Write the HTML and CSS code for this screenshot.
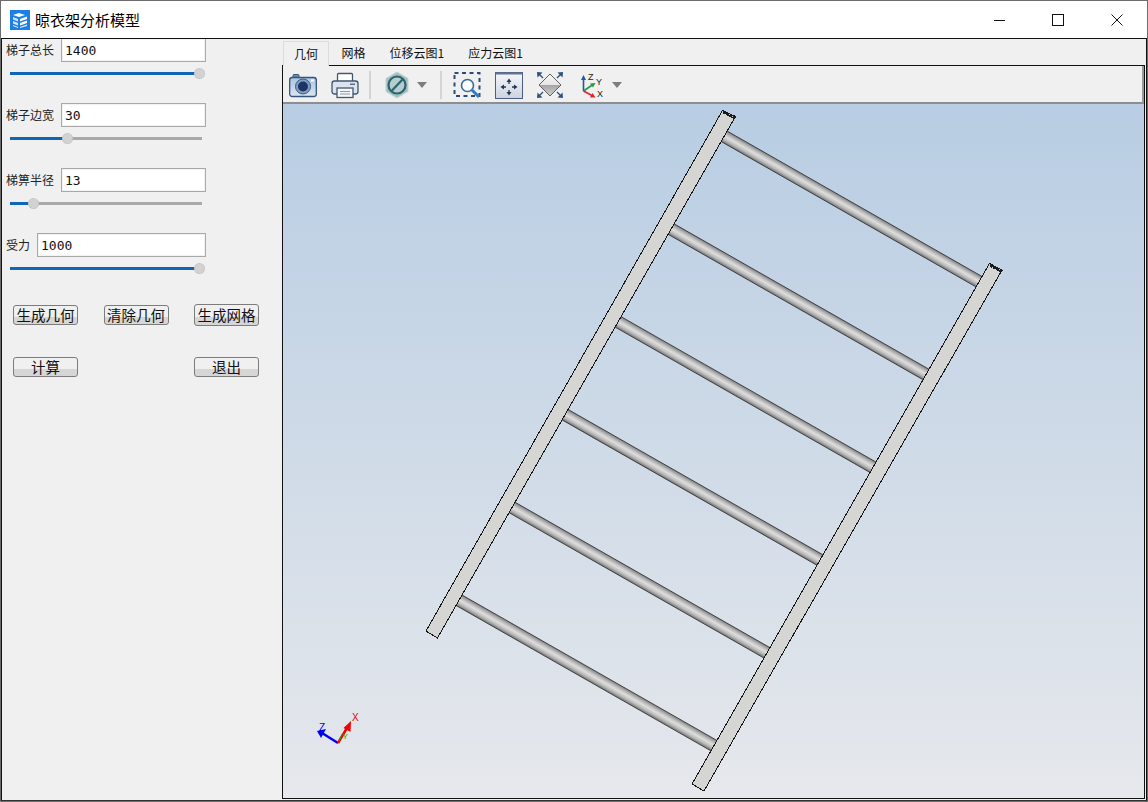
FILE: index.html
```html
<!DOCTYPE html>
<html lang="zh-CN">
<head>
<meta charset="utf-8">
<title>晾衣架分析模型</title>
<link rel="stylesheet" href="styles.css">
</head>
<body>
<div class="window">
  <header class="titlebar">
    <svg class="app-icon" width="20" height="20" viewBox="0 0 20 20">
      <rect width="20" height="20" fill="#1b7fe6"/>
      <path d="M3 5 L9 3 L15 5 L9 7 Z" fill="#fff"/>
      <path d="M3 7 L8 9 V11.5 L3 9.5 Z M3 11 L8 13 V15.5 L3 13.5 Z" fill="#cfe6fb"/>
      <path d="M10 9 L17 6.5 V9 L10 11.5 Z M10 13 L17 10.5 V13 L10 15.5 Z" fill="#fff"/>
      <path d="M3 15 L8 17 V18 L3 16 Z M10 17 L17 14.5 V16 L10 18 Z" fill="#e6f2fd"/>
    </svg>
    <span class="app-title">晾衣架分析模型</span>
    <div class="win-controls">
      <div class="win-btn"><svg width="12" height="12" viewBox="0 0 12 12"><path d="M1 6.5H12" stroke="#111" fill="none"/></svg></div>
      <div class="win-btn"><svg width="12" height="12" viewBox="0 0 12 12"><rect x=".5" y=".5" width="11" height="11" stroke="#111" fill="none"/></svg></div>
      <div class="win-btn"><svg width="12" height="12" viewBox="0 0 12 12"><path d="M.5 .5L11.500 11.500M11.500 .5L.5 11.500" stroke="#111" fill="none"/></svg></div>
    </div>
  </header>

  <main class="main">
    <aside class="sidebar">
      <section class="field">
        <div class="field-row"><label class="field-label">梯子总长</label><input class="field-input" value="1400"></div>
        <div class="slider"><div class="slider-fill" style="width:189px"><span class="slider-knob"></span></div></div>
      </section>
      <section class="field">
        <div class="field-row"><label class="field-label">梯子边宽</label><input class="field-input" value="30"></div>
        <div class="slider"><div class="slider-fill" style="width:57px"><span class="slider-knob"></span></div></div>
      </section>
      <section class="field">
        <div class="field-row"><label class="field-label">梯箅半径</label><input class="field-input" value="13"></div>
        <div class="slider"><div class="slider-fill" style="width:23px"><span class="slider-knob"></span></div></div>
      </section>
      <section class="field">
        <div class="field-row"><label class="field-label">受力</label><input class="field-input" value="1000"></div>
        <div class="slider"><div class="slider-fill" style="width:189px"><span class="slider-knob"></span></div></div>
      </section>
      <div class="btn-row btn-row-first">
        <button class="btn">生成几何</button>
        <button class="btn">清除几何</button>
        <button class="btn btn-tall">生成网格</button>
      </div>
      <div class="btn-row btn-row-second">
        <button class="btn">计算</button>
        <button class="btn">退出</button>
      </div>
    </aside>

    <section class="panel">
      <nav class="tabs">
        <div class="tab tab-active">几何</div>
        <div class="tab">网格</div>
        <div class="tab">位移云图1</div>
        <div class="tab">应力云图1</div>
      </nav>
      <div class="pane">
        <div class="toolbar">
          <svg class="tool" width="28" height="28" viewBox="0 0 28 28">
            <defs><linearGradient id="camBody" x1="0" y1="0" x2="0" y2="1"><stop offset="0" stop-color="#a9c5e2"/><stop offset="1" stop-color="#dbe6f1"/></linearGradient></defs>
            <path d="M4 7V4.500Q4 3.500 5 3.500H9Q10 3.500 10 4.500V7" fill="#6f8db0" stroke="#3a5578"/>
            <rect x=".7" y="6.500" width="26.600" height="19" rx="2.500" fill="url(#camBody)" stroke="#37537a" stroke-width="1.300"/>
            <circle cx="14" cy="15.500" r="7.500" fill="#7f9fc2" stroke="#3b5a83"/>
            <circle cx="14" cy="15.500" r="5" fill="#1c3563"/>
            <rect x="22" y="8.500" width="3" height="2" fill="#fff"/>
          </svg>
          <svg class="tool ml-14" width="28" height="28" viewBox="0 0 28 28">
            <rect x="6.500" y="2.500" width="15" height="9" rx="1" fill="#fff" stroke="#44576f" stroke-width="1.300"/>
            <rect x="1" y="10" width="26" height="13" rx="2.500" fill="#dbe4ee" stroke="#3f5570" stroke-width="1.300"/>
            <rect x="19" y="12.500" width="5" height="1.500" fill="#5c6f88"/>
            <rect x="6" y="17" width="16" height="9.500" fill="#f4f6f9" stroke="#44576f" stroke-width="1.300"/>
            <path d="M9 20.500H19M9 23H19" stroke="#8a99ac"/>
          </svg>
          <span class="tool-sep ml-10"></span>
          <svg class="tool ml-12" width="28" height="28" viewBox="0 0 28 28">
            <path d="M14 1 L25 7.500 V20.500 L14 27 L3 20.500 V7.500 Z" fill="#a3bfc0" stroke="#c2d3d3"/>
            <circle cx="14" cy="14" r="8.500" fill="#b5cdce" stroke="#2c6470" stroke-width="2.200"/>
            <path d="M9 19.500L19.500 8.500" stroke="#2c6470" stroke-width="2.200"/>
          </svg>
          <span class="tool-caret ml-6"></span>
          <span class="tool-sep ml-13"></span>
          <svg class="tool ml-11" width="28" height="28" viewBox="0 0 28 28">
            <rect x="1.500" y="2" width="25" height="23" fill="none" stroke="#2b4a78" stroke-width="2" stroke-dasharray="4 3.500"/>
            <circle cx="14.500" cy="14.500" r="6" fill="#fff" stroke="#3a6a9a" stroke-width="1.600"/>
            <path d="M19 19L26 26" stroke="#2a7dc6" stroke-width="3"/>
          </svg>
          <svg class="tool ml-14" width="28" height="28" viewBox="0 0 28 28">
            <defs><linearGradient id="fitBg" x1="0" y1="0" x2="0" y2="1"><stop offset="0" stop-color="#f5f6f9"/><stop offset="1" stop-color="#cdd4e1"/></linearGradient></defs>
            <rect x=".5" y="1.500" width="27" height="26" fill="url(#fitBg)" stroke="#4c5f82"/>
            <rect x=".5" y="1.500" width="27" height="2" fill="#5f7397"/>
            <path d="M14 10.500V13M14 19V21.500M8.500 16H11M17 16H19.500" stroke="#26364f" stroke-width="1.300"/>
            <path d="M14 7.500L11.500 11H16.500ZM14 24.500L11.500 21H16.500ZM5.500 16L9 13.500V18.500ZM22.500 16L19 13.500V18.500Z" fill="#26364f"/>
          </svg>
          <svg class="tool ml-13" width="28" height="28" viewBox="0 0 28 28">
            <defs><linearGradient id="isoBg" x1="0" y1="0" x2="0" y2="1"><stop offset="0" stop-color="#f7f7f7"/><stop offset=".5" stop-color="#e6e6e6"/><stop offset=".5" stop-color="#a4a4a4"/><stop offset="1" stop-color="#d2d2d2"/></linearGradient></defs>
            <path d="M14 3L25 14L14 25L3 14Z" fill="url(#isoBg)" stroke="#5e5e5e"/>
            <path d="M2.500 2.500L7 7M25.500 2.500L21 7M2.500 25.500L7 21M25.500 25.500L21 21" stroke="#2f4f80" stroke-width="1.400"/>
            <path d="M1 1L6.500 1.500 1.500 6.500ZM27 1L21.500 1.500 26.500 6.500ZM1 27L6.500 26.500 1.500 21.500ZM27 27L21.500 26.500 26.500 21.500Z" fill="#2f4f80"/>
          </svg>
          <svg class="tool ml-17" width="28" height="28" viewBox="0 0 28 28">
            <path d="M2.500 20V7" stroke="#24579f" stroke-width="1.600"/>
            <path d="M2.500 4L0 9H5Z" fill="#24579f"/>
            <path d="M2.500 20L12 13.500" stroke="#1f9a4a" stroke-width="1.600"/>
            <path d="M14.500 12L9 12.500L12 16.500Z" fill="#1f9a4a"/>
            <path d="M2.500 20L12 25" stroke="#e0242c" stroke-width="1.600"/>
            <path d="M14.500 26.500L9 26.500L11.500 22Z" fill="#e0242c"/>
            <text class="axis-label" x="7" y="8.500">Z</text>
            <text class="axis-label" x="15" y="14">Y</text>
            <text class="axis-label" x="16" y="26">X</text>
          </svg>
          <span class="tool-caret ml-3"></span>
        </div>

        <div class="viewport">
          <svg class="scene" viewBox="283 104 861 694" width="861" height="694">
            <defs>
              <linearGradient id="rungShade" x1="0" y1="0" x2="0" y2="1">
                <stop offset="0" stop-color="#808080"/>
                <stop offset=".28" stop-color="#c0c0c0"/>
                <stop offset=".48" stop-color="#dedede"/>
                <stop offset=".74" stop-color="#bababa"/>
                <stop offset="1" stop-color="#727272"/>
              </linearGradient>
              <g id="rung">
                <rect x="-3" y="-6" width="300" height="12" fill="url(#rungShade)"/>
                <path class="rung-edge" d="M-3 -6H297M-3 6H297"/>
              </g>
            </defs>
            <use href="#rung" transform="translate(724.5 136.5) rotate(29.7)"/>
            <use href="#rung" transform="translate(671.5 229.3) rotate(29.7)"/>
            <use href="#rung" transform="translate(618.5 322.1) rotate(29.7)"/>
            <use href="#rung" transform="translate(565.5 414.9) rotate(29.7)"/>
            <use href="#rung" transform="translate(512.5 507.7) rotate(29.7)"/>
            <use href="#rung" transform="translate(459.5 600.5) rotate(29.7)"/>
            <polygon class="rail" points="722.500,110.500 735.500,116.500 437.500,638 426,631"/>
            <polygon class="rail" points="989.500,263.500 1002,270 704,791 692,784"/>
            <path class="rail-cap" d="M723 112L735.500 118"/>
            <path class="rail-cap" d="M990 265L1002 271.500"/>
            <path d="M338 743L322 733" stroke="#0000f0" stroke-width="2.500" fill="none"/>
            <path d="M317 731L326 729L321 738Z" fill="#0000f0"/>
            <path d="M338 743L347 728" stroke="#f00000" stroke-width="2.500" fill="none"/>
            <path d="M351 721L350.500 732L343.500 728Z" fill="#f00000"/>
            <path d="M339 742L342 734" stroke="#00b000" fill="none"/>
            <text class="mini-label mini-x" x="352" y="721">X</text>
            <text class="mini-label mini-z" x="319" y="731">Z</text>
            <text class="mini-label mini-y" x="342.500" y="739">Y</text>
          </svg>
        </div>
      </div>
    </section>
  </main>
</div>
</body>
</html>
```

FILE: styles.css
```css
* { box-sizing: border-box; }

html, body {
  margin: 0;
  padding: 0;
  background: #f0f0f0;
}

body {
  font-family: "Noto Sans CJK SC", "Liberation Sans", sans-serif;
  color: #111;
}

.window {
  width: 1148px;
  height: 802px;
  border: 1px solid #6c6c6c;
  display: flex;
  flex-direction: column;
  overflow: hidden;
}

/* title bar */
.titlebar {
  height: 37px;
  flex: none;
  background: #fff;
  display: flex;
  align-items: center;
  padding-left: 9px;
}

.app-icon { flex: none; margin-top: 1px; }

.app-title {
  margin-left: 5px;
  font-size: 15px;
  line-height: 20px;
  color: #000;
}

.win-controls {
  margin-left: auto;
  display: flex;
  height: 100%;
}

.win-btn {
  width: 59px;
  padding-right: 1px;
  display: flex;
  align-items: center;
  justify-content: center;
}

/* main frame */
.main {
  flex: 1;
  min-height: 0;
  display: flex;
  border: 1px solid #111;
  border-bottom-color: #333;
  background: #f0f0f0;
}

/* left column */
.sidebar {
  width: 280px;
  flex: none;
  overflow: hidden;
}

.field {
  height: 65px;
  padding-left: 4px;
  width: 204px;
}

.field:first-child { margin-top: -1px; }

.field-row {
  display: flex;
  align-items: center;
  gap: 7px;
  height: 24px;
}

.field-label {
  font-size: 12px;
  line-height: 16px;
  color: #222;
  white-space: nowrap;
}

.field-input {
  flex: 1;
  min-width: 0;
  height: 24px;
  padding: 1px 3px 0;
  border: 1px solid #a9a9a9;
  box-shadow: inset 0 0 0 1px #f2f2f2;
  background: #fff;
  outline: none;
  font-family: "DejaVu Sans Mono", "Liberation Mono", monospace;
  font-size: 13px;
  color: #111;
}

.slider {
  margin: 10px 0 0 4px;
  width: 192px;
  height: 3px;
  background: #a9a9a9;
}

.slider-fill {
  position: relative;
  height: 3px;
  background: #0f66b8;
}

.slider-knob {
  position: absolute;
  right: -6px;
  top: -4px;
  width: 11px;
  height: 11px;
  border-radius: 50%;
  background: #d2d2d2;
  border: 1px dotted #bcbcbc;
}

.btn-row {
  display: flex;
  align-items: center;
  justify-content: space-between;
  width: 257px;
  padding-left: 11px;
}

.btn-row-first { height: 22px; margin-top: 6px; }
.btn-row-second { height: 20px; margin-top: 31px; }

.btn {
  width: 65px;
  height: 20px;
  padding: 0;
  border: 1px solid #7c7c7c;
  border-radius: 3px;
  background: linear-gradient(#f0f0f0 0, #f0f0f0 62%, #d6d6d6 62%, #d6d6d6 100%);
  font-family: "Noto Sans CJK SC", "Liberation Sans", sans-serif;
  font-size: 14.5px;
  line-height: 18px;
  color: #111;
  white-space: nowrap;
}

.btn-tall { height: 22px; }

/* right column */
.panel {
  flex: 1;
  min-width: 0;
  display: flex;
  flex-direction: column;
  padding: 0 1px 1px 0;
}

.tabs {
  height: 26px;
  flex: none;
  display: flex;
  align-items: flex-end;
  padding-left: 1px;
}

.tab {
  height: 24px;
  padding: 0 11.5px 0 12.5px;
  font-size: 12px;
  line-height: 24px;
  color: #111;
  white-space: nowrap;
}

.tab-active {
  position: relative;
  z-index: 1;
  height: 25px;
  margin-bottom: -1px;
  padding: 0 10px;
  background: #f0f0f0;
  border: 1px solid #dcdcdc;
  border-bottom: 0;
}

.pane {
  flex: 1;
  min-height: 0;
  border: 1px solid #111;
  display: flex;
  flex-direction: column;
}

.toolbar {
  height: 38px;
  flex: none;
  display: flex;
  align-items: center;
  padding: 2px 0 0 6px;
  background: #f0f0f0;
  border-right: 2px solid #9a9a9a;
  border-bottom: 2px solid #8e8e8e;
}

.tool { flex: none; display: block; overflow: visible; }

.ml-3 { margin-left: 3px; }
.ml-6 { margin-left: 6px; }
.ml-10 { margin-left: 10px; }
.ml-11 { margin-left: 11px; }
.ml-12 { margin-left: 12px; }
.ml-13 { margin-left: 13px; }
.ml-14 { margin-left: 14px; }
.ml-17 { margin-left: 17px; }

.tool-sep {
  flex: none;
  width: 2px;
  height: 28px;
  background: #d4d4d4;
}

.tool-caret {
  flex: none;
  width: 0;
  height: 0;
  border-left: 5.5px solid transparent;
  border-right: 5.5px solid transparent;
  border-top: 6px solid #7d7d7d;
}

.axis-label {
  font-family: "Liberation Sans", sans-serif;
  font-size: 9px;
  fill: #222;
}

/* 3D view */
.viewport {
  flex: 1;
  min-height: 0;
  background: linear-gradient(#b8cde3, #e6e8ec);
}

.scene { display: block; }

.rung-edge {
  fill: none;
  stroke: #333;
  stroke-width: .8;
}

.rail {
  fill: #d5d5d3;
  stroke: #161616;
  stroke-width: 1;
  shape-rendering: crispEdges;
}

.rail-cap {
  fill: none;
  stroke: #1c1c1c;
  stroke-width: 3;
  stroke-dasharray: 3 .6;
  shape-rendering: crispEdges;
}

.mini-label {
  font-family: "Liberation Sans", sans-serif;
  font-size: 10px;
}

.mini-x { fill: #f00000; }
.mini-z { fill: #0000f0; }
.mini-y { fill: #00b000; font-size: 8px; }
```
